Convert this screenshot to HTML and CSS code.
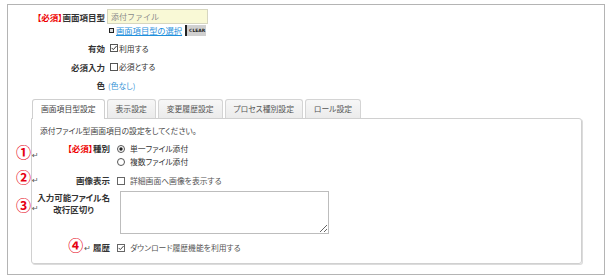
FILE: index.html
```html
<!DOCTYPE html>
<html lang="ja">
<head>
    <meta charset="UTF-8">
    <meta name="viewport" content="width=device-width, initial-scale=1.0">
    <title>画面項目型設定</title>
    <link rel="stylesheet" href="styles.css">
</head>
<body>
    <div class="frame">

        <!-- Basic item settings -->
        <div class="form-top">
            <div class="row row-type">
                <div class="label"><span class="req">【必須】</span>画面項目型</div>
                <div class="value">
                    <input type="text" class="type-input" value="添付ファイル" readonly>
                </div>
            </div>
            <div class="row row-link">
                <div class="label"></div>
                <div class="value">
                    <span class="bullet"></span><a href="#" class="link">画面項目型の選択</a><span class="clear-btn">CLEAR</span>
                </div>
            </div>
            <div class="row row-enabled">
                <div class="label">有効</div>
                <div class="value">
                    <svg class="box" viewBox="0 0 8 8"><rect x="0.5" y="0.5" width="7" height="7" fill="#fff" stroke="#555"/><path d="M1.6 3.9 L3.3 5.6 L6.6 2" fill="none" stroke="#333"/></svg>
                    <span>利用する</span>
                </div>
            </div>
            <div class="row row-required">
                <div class="label">必須入力</div>
                <div class="value">
                    <svg class="box" viewBox="0 0 8 8"><rect x="0.5" y="0.5" width="7" height="7" fill="#fff" stroke="#555"/></svg>
                    <span>必須とする</span>
                </div>
            </div>
            <div class="row row-color">
                <div class="label">色</div>
                <div class="value"><span class="color-none">(色なし)</span></div>
            </div>
        </div>

        <!-- Tabs -->
        <div class="tabs">
            <div class="tab active">画面項目型設定</div>
            <div class="tab">表示設定</div>
            <div class="tab">変更履歴設定</div>
            <div class="tab">プロセス種別設定</div>
            <div class="tab">ロール設定</div>
        </div>

        <div class="panel">
            <p class="desc">添付ファイル型画面項目の設定をしてください。</p>

            <div class="prow prow-kind">
                <span class="mark mark-1">①<span class="ret">↵</span></span>
                <div class="plabel"><span class="req">【必須】</span>種別</div>
                <div class="pvalue">
                    <div class="opt">
                        <svg class="radio" viewBox="0 0 8 8"><circle cx="4" cy="4" r="3.5" fill="#fff" stroke="#555"/><circle cx="4" cy="4" r="1.7" fill="#222"/></svg>
                        <span>単一ファイル添付</span>
                    </div>
                    <div class="opt">
                        <svg class="radio" viewBox="0 0 8 8"><circle cx="4" cy="4" r="3.5" fill="#fff" stroke="#555"/></svg>
                        <span>複数ファイル添付</span>
                    </div>
                </div>
            </div>

            <div class="prow prow-image">
                <span class="mark mark-2">②<span class="ret">↵</span></span>
                <div class="plabel">画像表示</div>
                <div class="pvalue">
                    <div class="opt">
                        <svg class="box" viewBox="0 0 8 8"><rect x="0.5" y="0.5" width="7" height="7" fill="#fff" stroke="#666"/></svg>
                        <span class="light">詳細画面へ画像を表示する</span>
                    </div>
                </div>
            </div>

            <div class="prow prow-names">
                <span class="mark mark-3">③<span class="ret">↵</span></span>
                <div class="plabel"><span class="two-line">入力可能ファイル名<br>改行区切り</span></div>
                <div class="pvalue">
                    <textarea class="names"></textarea>
                </div>
            </div>

            <div class="prow prow-history">
                <div class="plabel"><span class="mark-inline">④</span><span class="ret">↵</span> 履歴</div>
                <div class="pvalue">
                    <div class="opt">
                        <svg class="box" viewBox="0 0 8 8"><rect x="0.5" y="0.5" width="7" height="7" fill="#fff" stroke="#666"/><path d="M1.6 3.9 L3.3 5.6 L6.6 2" fill="none" stroke="#444"/></svg>
                        <span class="light">ダウンロード履歴機能を利用する</span>
                    </div>
                </div>
            </div>
        </div>
    </div>
</body>
</html>
```

FILE: styles.css
```css
body {
    margin: 0;
    background-color: #fff;
    font-family: "Noto Sans CJK JP", "DejaVu Sans", sans-serif;
    font-size: 7.8px;
    font-feature-settings: "palt";
    color: #333;
}

.frame {
    box-sizing: border-box;
    width: 598px;
    height: 271px;
    margin: 4px 0 0 7px;
    padding: 4px 0 0 0;
    border: 1px solid #b4b4b4;
}

/* top form */

.row {
    display: flex;
    align-items: center;
}

.label {
    width: 97px;
    flex: none;
    text-align: right;
    font-size: 8.5px;
    font-weight: bold;
    color: #333;
}

.value {
    display: flex;
    align-items: center;
    margin-left: 3px;
}

.req {
    color: #e00;
    font-weight: bold;
}

.row-type {
    height: 15px;
}

.row-link {
    height: 12px;
}

.row-enabled {
    height: 18px;
    margin-top: 3px;
}

.row-required {
    height: 19px;
}

.row-color {
    height: 18px;
}

.type-input {
    box-sizing: border-box;
    width: 101px;
    height: 15px;
    margin: 0 0 0 -1px;
    padding: 0 3px;
    border: 1px solid #d6d6c0;
    background-color: #f9f9d6;
    font-family: inherit;
    font-size: 8px;
    color: #8a8a8a;
    outline: none;
}

.bullet {
    box-sizing: border-box;
    width: 5px;
    height: 5px;
    margin: 0 1px 0 1px;
    border: 1.5px solid #222;
    background-color: #ddd;
}

.link {
    color: #1e8fdc;
    font-size: 8.3px;
    text-decoration: underline;
    margin-left: 1px;
}

.clear-btn {
    box-sizing: border-box;
    height: 11px;
    margin-left: 3px;
    padding: 0 1px 0 2px;
    border-left: 2px solid #222;
    background-color: #d0d0d0;
    font-family: "DejaVu Sans", sans-serif;
    font-size: 4.5px;
    font-weight: bold;
    line-height: 11px;
    color: #222;
}

.box, .radio {
    width: 8px;
    height: 8px;
    flex: none;
}

.row .box {
    margin: 0 1px 0 2px;
}

.color-none {
    color: #3795d6;
}

/* tabs */

.tabs {
    display: flex;
    gap: 2px;
    margin: 5px 0 0 24px;
    position: relative;
    z-index: 1;
}

.tab {
    box-sizing: border-box;
    height: 19px;
    padding: 0 8px;
    border: 1px solid #d4d4d4;
    border-bottom: none;
    border-radius: 3px 3px 0 0;
    background: linear-gradient(#f7f7f7, #ebebeb);
    line-height: 18px;
    color: #555;
}

.tab.active {
    height: 20px;
    margin-bottom: -1px;
    background: #fff;
    border-color: #cfcfcf;
    color: #444;
}

/* panel */

.panel {
    box-sizing: border-box;
    width: 551px;
    height: 146px;
    margin-left: 23px;
    padding: 6px 0 0 0;
    border: 1px solid #d0d0d0;
    border-radius: 0 3px 3px 3px;
    box-shadow: 1px 1px 0 #dcdcdc;
}

.desc {
    margin: 0;
    padding-left: 8px;
    line-height: 12px;
    color: #444;
}

.prow {
    display: flex;
    position: relative;
    line-height: 13px;
}

.plabel {
    width: 78px;
    flex: none;
    text-align: right;
    font-size: 8.5px;
    font-weight: bold;
    color: #333;
}

.pvalue {
    margin-left: 7px;
}

.opt {
    display: flex;
    align-items: center;
    height: 13px;
}

.opt .box, .opt .radio {
    margin-right: 5px;
}

.light {
    color: #555;
}

.prow-kind {
    margin-top: 5px;
}

.prow-image {
    margin-top: 6px;
}

.prow-names {
    margin-top: 4px;
}

.two-line {
    display: inline-block;
    text-align: center;
    line-height: 12px;
}

.names {
    box-sizing: border-box;
    display: block;
    width: 209px;
    height: 43px;
    margin: 0 0 0 3px;
    border: 1px solid #bdbdbd;
    outline: none;
}

.prow-history {
    margin-top: 7px;
}

/* annotation numbers */

.mark {
    position: absolute;
    left: -16px;
    font-size: 15px;
    font-weight: bold;
    line-height: 15px;
    color: #e60012;
    white-space: nowrap;
}

.mark-1 {
    top: 2px;
}

.mark-2 {
    top: -5px;
}

.mark-3 {
    top: 6px;
}

.ret {
    font-size: 8px;
    color: #555;
    font-weight: normal;
    margin-left: 1px;
}

.mark-inline {
    font-size: 15px;
    font-weight: bold;
    line-height: 0;
    color: #e60012;
}
```
